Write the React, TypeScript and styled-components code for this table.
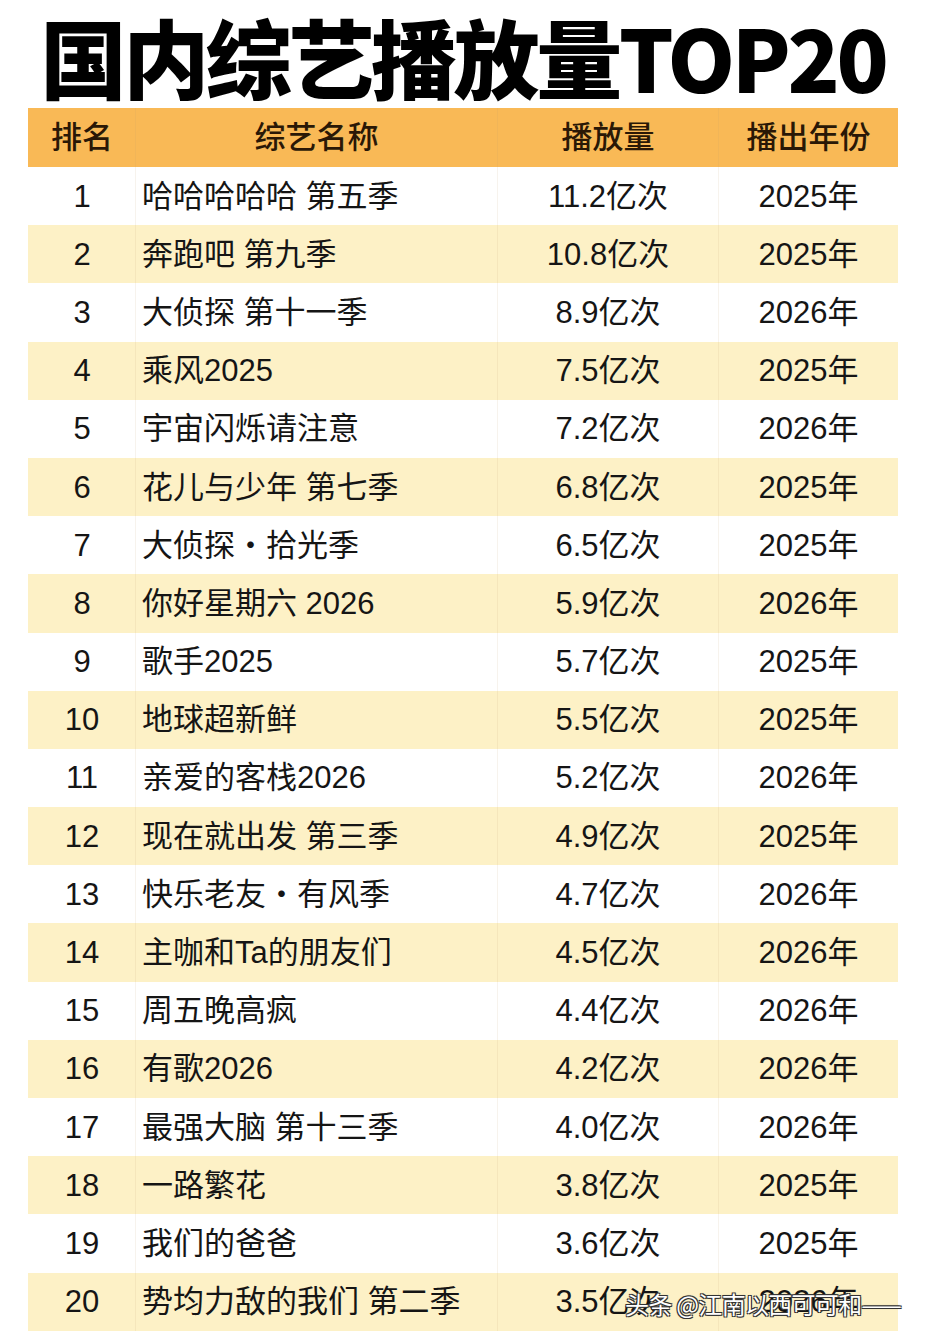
import React from 'react'
import styled, { createGlobalStyle } from 'styled-components'

const GlobalStyle = createGlobalStyle`
  html, body {
    margin: 0;
    padding: 0;
    background: #ffffff;
  }
  body {
    font-family: 'Liberation Sans', 'Noto Sans CJK SC', sans-serif;
    color: #111111;
  }
`

const Page = styled.div`
  width: 940px;
  min-height: 1342px;
  padding: 8px 0 0 28px;
  box-sizing: border-box;
`

const Title = styled.h1`
  width: 870px;
  margin: 0 0 4px;
  font-family: 'Noto Sans CJK SC', sans-serif;
  font-size: 86px;
  line-height: 96px;
  font-weight: 900;
  text-align: center;
  letter-spacing: -3.4px;
  white-space: nowrap;
  color: #000000;
`

const Table = styled.div`
  width: 870px;
  position: relative;
`

const Row = styled.div<{ $kind: 'head' | 'odd' | 'even' }>`
  display: grid;
  grid-template-columns: 107px 362px 221px 180px;
  height: ${({ $kind }) => ($kind === 'head' ? '59px' : '58.2px')};
  background: ${({ $kind }) =>
    $kind === 'head' ? '#f9b956' : $kind === 'even' ? '#fdf1c6' : '#ffffff'};
  color: ${({ $kind }) => ($kind === 'head' ? '#2a1806' : '#151515')};
  font-size: 31px;
  line-height: 1;
  font-weight: ${({ $kind }) => ($kind === 'head' ? 500 : 400)};
`

const Cell = styled.div<{ $align?: 'left' | 'center'; $line?: boolean }>`
  display: flex;
  align-items: center;
  justify-content: ${({ $align }) => ($align === 'left' ? 'flex-start' : 'center')};
  padding-left: ${({ $align }) => ($align === 'left' ? '6px' : '0')};
  border-left: 1px solid ${({ $line }) => ($line ? 'rgba(190, 160, 110, 0.12)' : 'transparent')};
  white-space: nowrap;
  overflow: hidden;
`

const Watermark = styled.div`
  position: absolute;
  right: -3px;
  bottom: 10px;
  font-family: 'Noto Sans CJK SC', sans-serif;
  font-size: 24px;
  color: #ffffff;
  letter-spacing: -0.7px;
  text-shadow:
    -1px -1px 0 #333, 1px -1px 0 #333, -1px 1px 0 #333, 1px 1px 0 #333,
    0 0 2px rgba(0, 0, 0, 0.6);
`

const shows: [string, string, string][] = [
  ['哈哈哈哈哈 第五季', '11.2亿次', '2025年'],
  ['奔跑吧 第九季', '10.8亿次', '2025年'],
  ['大侦探 第十一季', '8.9亿次', '2026年'],
  ['乘风2025', '7.5亿次', '2025年'],
  ['宇宙闪烁请注意', '7.2亿次', '2026年'],
  ['花儿与少年 第七季', '6.8亿次', '2025年'],
  ['大侦探・拾光季', '6.5亿次', '2025年'],
  ['你好星期六 2026', '5.9亿次', '2026年'],
  ['歌手2025', '5.7亿次', '2025年'],
  ['地球超新鲜', '5.5亿次', '2025年'],
  ['亲爱的客栈2026', '5.2亿次', '2026年'],
  ['现在就出发 第三季', '4.9亿次', '2025年'],
  ['快乐老友・有风季', '4.7亿次', '2026年'],
  ['主咖和Ta的朋友们', '4.5亿次', '2026年'],
  ['周五晚高疯', '4.4亿次', '2026年'],
  ['有歌2026', '4.2亿次', '2026年'],
  ['最强大脑 第十三季', '4.0亿次', '2026年'],
  ['一路繁花', '3.8亿次', '2025年'],
  ['我们的爸爸', '3.6亿次', '2025年'],
  ['势均力敌的我们 第二季', '3.5亿次', '2026年'],
]

const App = () => {
  return (
    <Page>
      <GlobalStyle />
      <Title>国内综艺播放量TOP20</Title>
      <Table>
        <Row $kind="head">
          <Cell>排名</Cell>
          <Cell $line>综艺名称</Cell>
          <Cell $line>播放量</Cell>
          <Cell $line>播出年份</Cell>
        </Row>
        {shows.map(([name, plays, year], i) => (
          <Row key={name} $kind={i % 2 === 0 ? 'odd' : 'even'}>
            <Cell>{i + 1}</Cell>
            <Cell $align="left" $line>
              {name}
            </Cell>
            <Cell $line>{plays}</Cell>
            <Cell $line>{year}</Cell>
          </Row>
        ))}
        <Watermark>头条 @江南以西可可和——</Watermark>
      </Table>
    </Page>
  )
}

export default App
